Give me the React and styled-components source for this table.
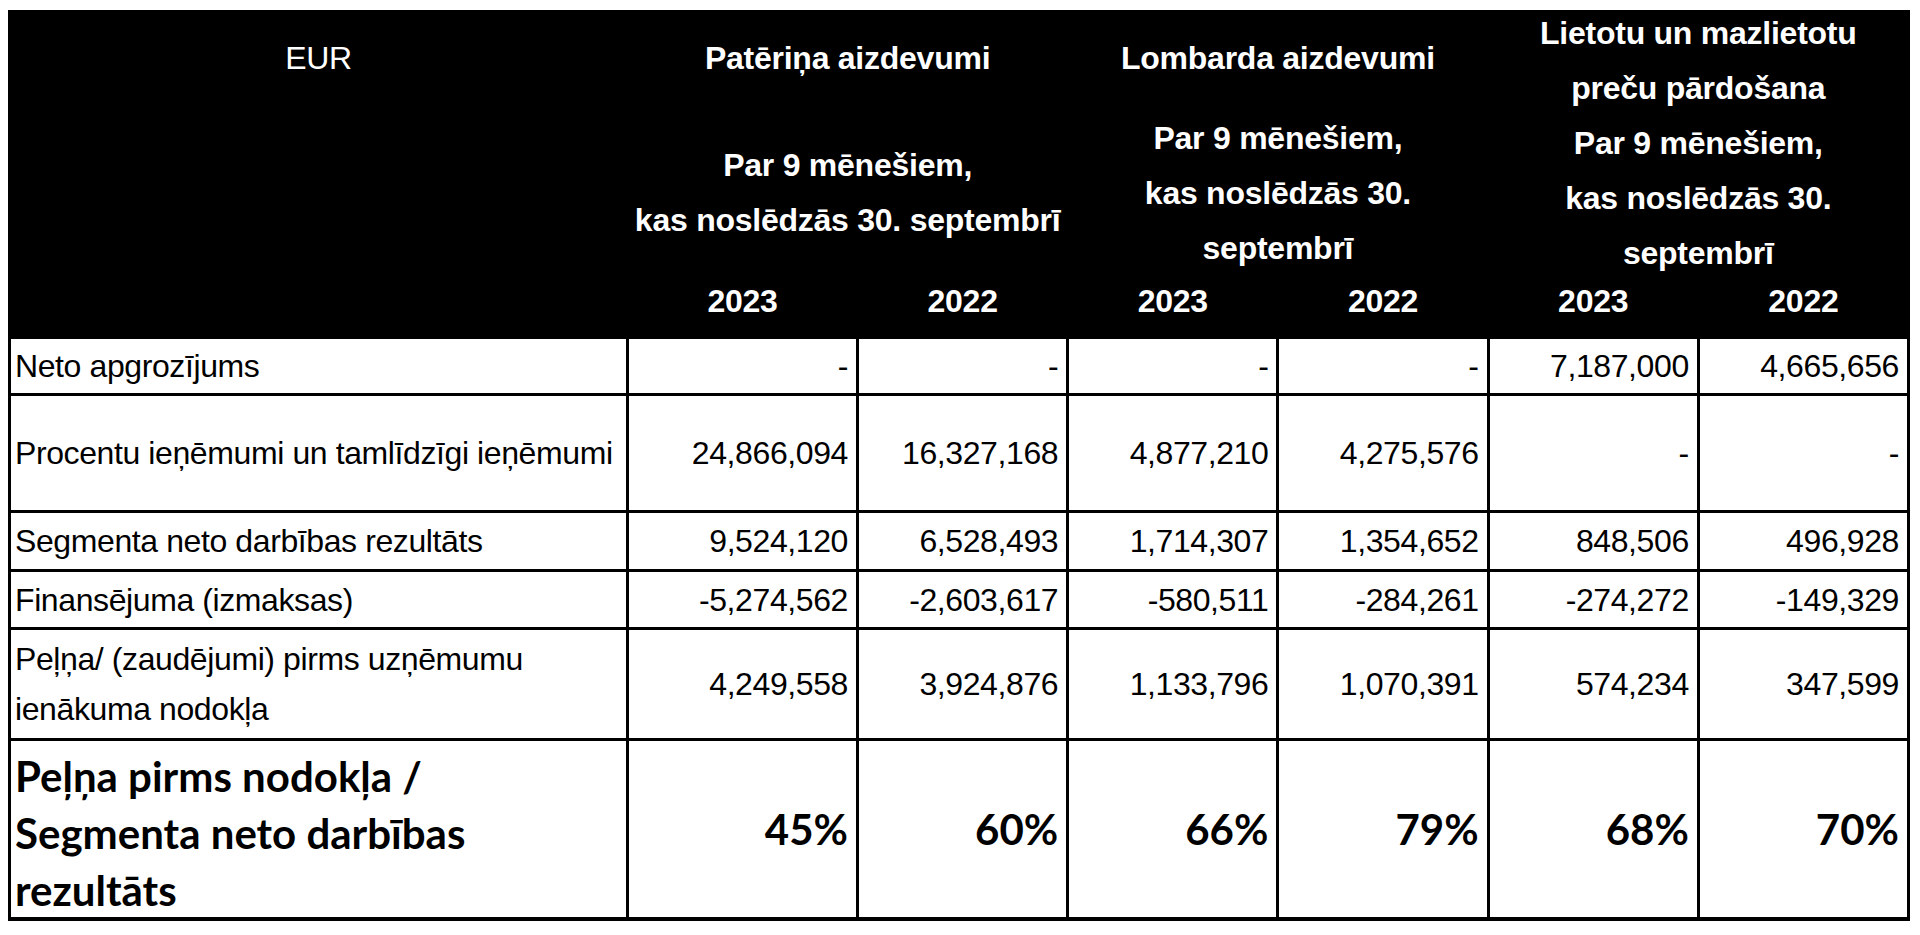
import styled, { createGlobalStyle } from "styled-components";

const GlobalStyle = createGlobalStyle`
  html, body {
    margin: 0;
    padding: 0;
    background: #fff;
  }
  body {
    font-family: "Liberation Sans", Arial, sans-serif;
    color: #000;
  }
`;

const Page = styled.div`
  padding: 10px 0 0 8px;
`;

const Grid = styled.div`
  display: grid;
  box-sizing: border-box;
  width: 1902px;
  grid-template-columns: 615px 227px repeat(5, 1fr);
  grid-template-rows: 97px 160px 60px 54px 114px 56px 55px 108px 176px;
  gap: 3px;
  padding: 3px 3px 4px 3px;
  background: #000;
`;

const HeadCell = styled.div`
  grid-column: ${(p) => (p.$cols ? `span ${p.$cols}` : "auto")};
  grid-row: ${(p) => (p.$rows ? `span ${p.$rows}` : "auto")};
  display: flex;
  flex-direction: column;
  align-items: center;
  justify-content: center;
  padding-bottom: ${(p) => p.$lift || 0}px;
  background: #000;
  color: #fff;
  font-size: 32px;
  font-weight: 700;
  letter-spacing: -0.25px;
  line-height: 55px;
  text-align: center;
  white-space: nowrap;
`;

const CurrencyCell = styled(HeadCell)`
  justify-content: flex-start;
  padding-top: 18px;
  font-weight: 400;
  letter-spacing: -0.4px;
`;

const Cell = styled.div`
  display: flex;
  flex-direction: ${(p) => (p.$label ? "column" : "row")};
  align-items: ${(p) => (p.$label ? "flex-start" : "center")};
  justify-content: ${(p) => (p.$label ? "center" : "flex-end")};
  padding: ${(p) => (p.$label ? "0 0 0 4px" : "0 8px 0 0")};
  background: #fff;
  font-size: 32px;
  letter-spacing: -0.4px;
  line-height: 50px;
  white-space: nowrap;
`;

const TotalCell = styled(Cell)`
  padding-top: ${(p) => (p.$label ? "8px" : "0")};
  font-family: Lato, "Open Sans", sans-serif;
  font-weight: 700;
  font-size: 42px;
  letter-spacing: 0;
  line-height: 57px;
`;

const periods = {
  two: ["Par 9 mēnešiem,", "kas noslēdzās 30. septembrī"],
  three: ["Par 9 mēnešiem,", "kas noslēdzās 30.", "septembrī"],
};

const years = ["2023", "2022", "2023", "2022", "2023", "2022"];

const rows = [
  {
    label: ["Neto apgrozījums"],
    values: ["-", "-", "-", "-", "7,187,000", "4,665,656"],
  },
  {
    label: ["Procentu ieņēmumi un tamlīdzīgi ieņēmumi"],
    values: ["24,866,094", "16,327,168", "4,877,210", "4,275,576", "-", "-"],
  },
  {
    label: ["Segmenta neto darbības rezultāts"],
    values: ["9,524,120", "6,528,493", "1,714,307", "1,354,652", "848,506", "496,928"],
  },
  {
    label: ["Finansējuma (izmaksas)"],
    values: ["-5,274,562", "-2,603,617", "-580,511", "-284,261", "-274,272", "-149,329"],
  },
  {
    label: ["Peļņa/ (zaudējumi) pirms uzņēmumu", "ienākuma nodokļa"],
    values: ["4,249,558", "3,924,876", "1,133,796", "1,070,391", "574,234", "347,599"],
  },
];

const totals = {
  label: ["Peļņa pirms nodokļa /", "Segmenta neto darbības", "rezultāts"],
  values: ["45%", "60%", "66%", "79%", "68%", "70%"],
};

function Lines({ lines }) {
  return lines.map((line) => <span key={line}>{line}</span>);
}

export default function App() {
  return (
    <Page>
      <GlobalStyle />
      <Grid>
        <CurrencyCell $rows={3}>EUR</CurrencyCell>
        <HeadCell $cols={2} $lift={7}>Patēriņa aizdevumi</HeadCell>
        <HeadCell $cols={2} $lift={7}>Lombarda aizdevumi</HeadCell>
        <HeadCell $cols={2} $rows={2}>
          <Lines lines={["Lietotu un mazlietotu", "preču pārdošana", ...periods.three]} />
        </HeadCell>
        <HeadCell $cols={2}>
          <Lines lines={periods.two} />
        </HeadCell>
        <HeadCell $cols={2}>
          <Lines lines={periods.three} />
        </HeadCell>
        {years.map((year, i) => (
          <HeadCell key={i} $lift={10}>
            {year}
          </HeadCell>
        ))}

        {rows.map((row) => [
          <Cell $label key={row.label[0]}>
            <Lines lines={row.label} />
          </Cell>,
          ...row.values.map((value, i) => <Cell key={row.label[0] + i}>{value}</Cell>),
        ])}

        <TotalCell $label>
          <Lines lines={totals.label} />
        </TotalCell>
        {totals.values.map((value, i) => (
          <TotalCell key={i}>{value}</TotalCell>
        ))}
      </Grid>
    </Page>
  );
}
